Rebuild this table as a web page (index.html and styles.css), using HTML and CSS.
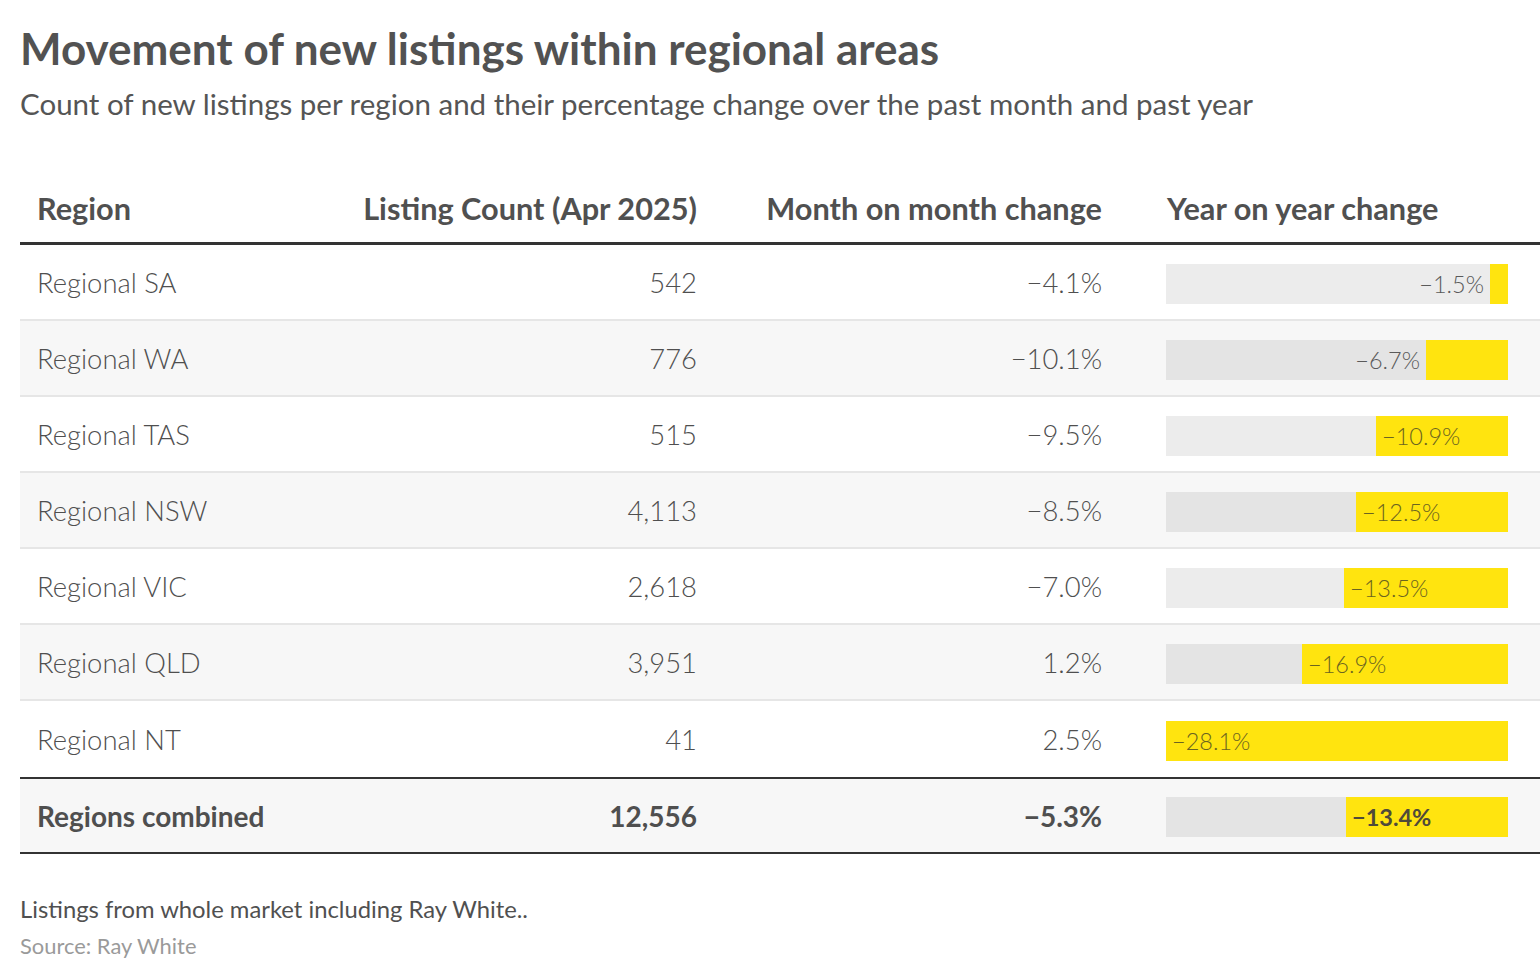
FILE: index.html
```html
<!DOCTYPE html>
<html lang="en">
<head>
<meta charset="utf-8">
<title>Movement of new listings within regional areas</title>
<link rel="stylesheet" href="styles.css">
</head>
<body>
<div class="chart">
  <header class="head">
    <h1 class="title">Movement of new listings within regional areas</h1>
    <p class="subtitle">Count of new listings per region and their percentage change over the past month and past year</p>
  </header>
  <div class="table">
    <div class="row hdr">
      <div class="c c1">Region</div>
      <div class="c c2">Listing Count (Apr 2025)</div>
      <div class="c c3">Month on month change</div>
      <div class="c c4">Year on year change</div>
    </div>
    <div class="row">
      <div class="c c1">Regional SA</div>
      <div class="c c2">542</div>
      <div class="c c3">−4.1%</div>
      <div class="c c4"><div class="bar"><span class="lbl out">−1.5%</span><span class="fill" style="width:18px"></span></div></div>
    </div>
    <div class="row alt">
      <div class="c c1">Regional WA</div>
      <div class="c c2">776</div>
      <div class="c c3">−10.1%</div>
      <div class="c c4"><div class="bar"><span class="lbl out">−6.7%</span><span class="fill" style="width:82px"></span></div></div>
    </div>
    <div class="row">
      <div class="c c1">Regional TAS</div>
      <div class="c c2">515</div>
      <div class="c c3">−9.5%</div>
      <div class="c c4"><div class="bar"><span class="fill" style="width:132px"><span class="lbl in">−10.9%</span></span></div></div>
    </div>
    <div class="row alt">
      <div class="c c1">Regional NSW</div>
      <div class="c c2">4,113</div>
      <div class="c c3">−8.5%</div>
      <div class="c c4"><div class="bar"><span class="fill" style="width:152px"><span class="lbl in">−12.5%</span></span></div></div>
    </div>
    <div class="row">
      <div class="c c1">Regional VIC</div>
      <div class="c c2">2,618</div>
      <div class="c c3">−7.0%</div>
      <div class="c c4"><div class="bar"><span class="fill" style="width:164px"><span class="lbl in">−13.5%</span></span></div></div>
    </div>
    <div class="row alt">
      <div class="c c1">Regional QLD</div>
      <div class="c c2">3,951</div>
      <div class="c c3">1.2%</div>
      <div class="c c4"><div class="bar"><span class="fill" style="width:206px"><span class="lbl in">−16.9%</span></span></div></div>
    </div>
    <div class="row">
      <div class="c c1">Regional NT</div>
      <div class="c c2">41</div>
      <div class="c c3">2.5%</div>
      <div class="c c4"><div class="bar"><span class="fill" style="width:342px"><span class="lbl in">−28.1%</span></span></div></div>
    </div>
    <div class="row total">
      <div class="c c1">Regions combined</div>
      <div class="c c2">12,556</div>
      <div class="c c3">−5.3%</div>
      <div class="c c4"><div class="bar"><span class="fill" style="width:162px"><span class="lbl in">−13.4%</span></span></div></div>
    </div>
  </div>
  <footer class="foot">
    <p class="note">Listings from whole market including Ray White..</p>
    <p class="source">Source: Ray White</p>
  </footer>
</div>
</body>
</html>
```

FILE: styles.css
```css
html, body {
  margin: 0;
  padding: 0;
  background: #ffffff;
}
body {
  font-family: Lato, "Open Sans", sans-serif;
  color: #505050;
}
.chart {
  padding: 20px 0 0 20px;
}
.head {
  margin: 0;
}
.title {
  margin: 0;
  font-size: 44px;
  font-weight: 700;
  line-height: 56px;
  color: #525252;
  letter-spacing: 0;
}
.subtitle {
  margin: 10px 0 0;
  font-size: 29.5px;
  font-weight: 400;
  line-height: 36px;
  color: #555555;
}
.table {
  margin-top: 52px;
}
.row {
  display: grid;
  grid-template-columns: 300px 377px 405px 438px;
  height: 76px;
  align-items: center;
  border-bottom: 2px solid #e6e6e6;
  box-sizing: border-box;
  font-size: 27.4px;
  font-weight: 300;
  color: #4f4f4f;
}
.row.alt {
  background: #f7f7f7;
}
.row.hdr {
  height: 71px;
  border-bottom: 3px solid #333333;
  font-weight: 700;
  font-size: 30.7px;
  color: #505050;
}
.row.hdr .c4 {
  padding-left: 65px;
}
.row.total {
  background: #f7f7f7;
  border-top: 2px solid #333333;
  border-bottom: 2px solid #333333;
  font-weight: 700;
  font-size: 28px;
  height: 77px;
}
.row:nth-last-child(2) {
  border-bottom: none;
}
.c1 {
  padding-left: 17px;
}
.c2, .c3 {
  text-align: right;
}
.c4 {
  padding-left: 64px;
}
.bar {
  width: 342px;
  height: 40px;
  margin-top: 3px;
  background: rgba(0, 0, 0, 0.075);
  display: flex;
  justify-content: flex-end;
  align-items: stretch;
}
.fill {
  background: #ffe40f;
  display: flex;
  align-items: center;
}
.lbl {
  font-size: 23.5px;
  font-weight: 300;
  color: #5a5a5a;
  line-height: 40px;
}
.lbl.out {
  padding-right: 6px;
}
.lbl.in {
  padding-left: 6px;
  color: #6b6420;
}
.total .lbl.in {
  font-weight: 700;
  color: #4f4a3a;
}
.foot {
  margin-top: 40px;
}
.note {
  margin: 0;
  font-size: 23.8px;
  line-height: 30px;
  color: #505050;
}
.source {
  margin: 9px 0 0;
  font-size: 21.9px;
  line-height: 26px;
  color: #9a9a9a;
}
```
